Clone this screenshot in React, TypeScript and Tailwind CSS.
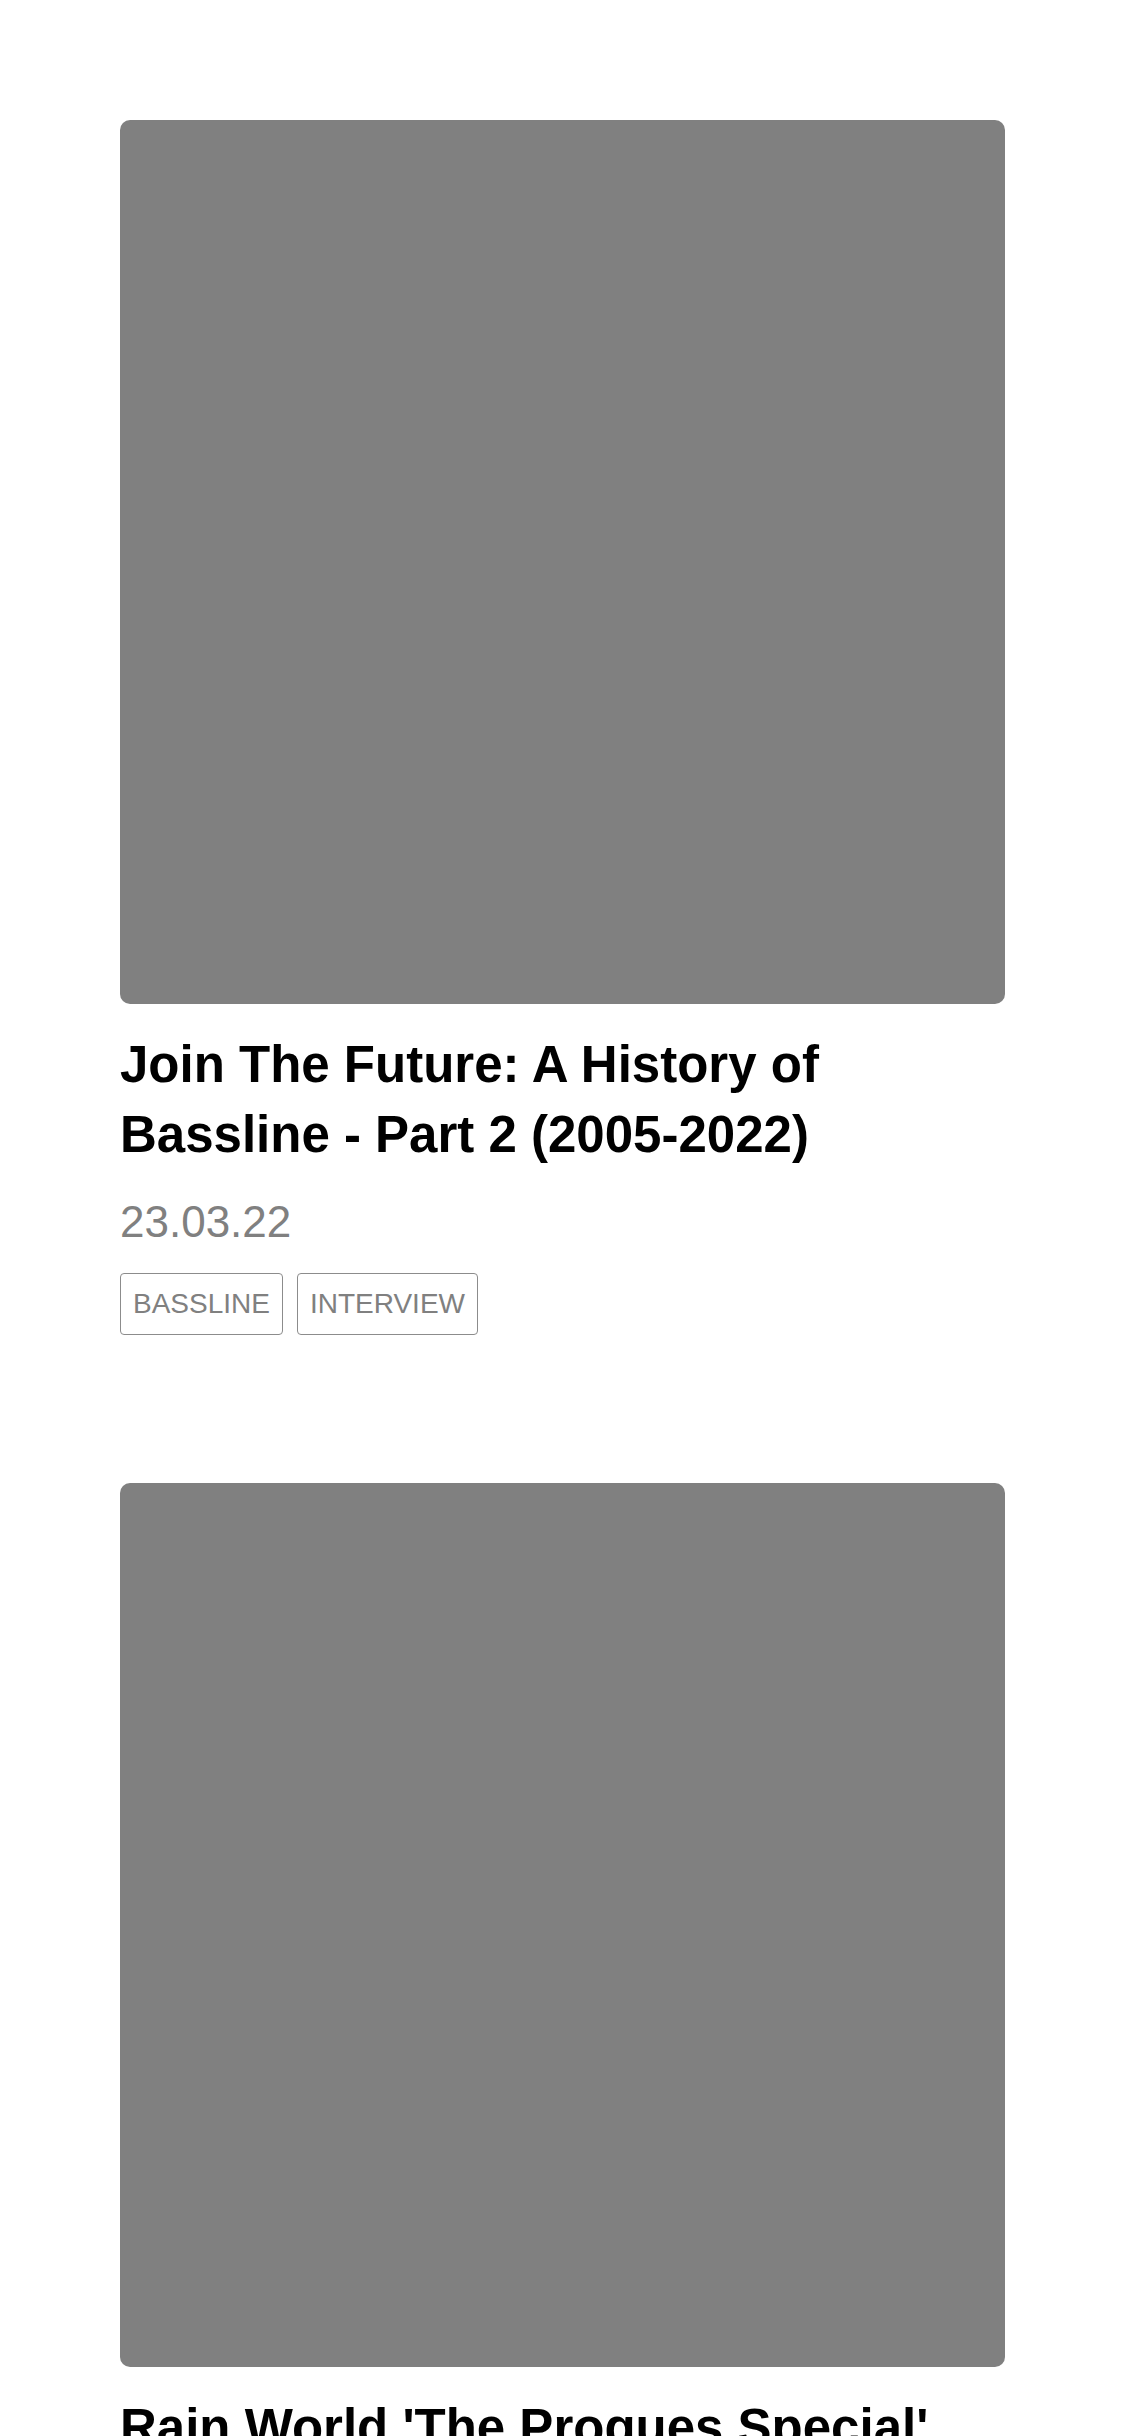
const POSTS = [
  {
    title: "Join The Future: A History of Bassline - Part 2 (2005-2022)",
    date: "23.03.22",
    tags: ["BASSLINE", "INTERVIEW"],
  },
  {
    title: "Rain World 'The Progues Special'",
    date: "16.03.22",
    tags: ["MIX", "RADIO"],
  },
]

export default function App() {
  return (
    <div className="min-h-screen bg-white px-[120px] pt-[120px] font-['Liberation_Sans',Arial,sans-serif]">
      <div className="flex flex-col gap-[148px]">
        {POSTS.map((post) => (
          <article key={post.title} className="flex flex-col">
            {/* Cover */}
            <div className="h-[884px] w-full rounded-[10px] bg-[#808080]" />

            <h2 className="mt-[26px] text-[51px] font-bold leading-[70px] text-black">
              {post.title}
            </h2>

            <p className="mt-[28px] text-[44px] leading-[48px] text-[#808080]">{post.date}</p>

            <div className="mt-[27px] flex gap-[14px]">
              {post.tags.map((tag) => (
                <span
                  key={tag}
                  className="flex h-[62px] items-center rounded-[4px] border border-[#8c8c8c] px-[12px] text-[28px] text-[#808080]"
                >
                  {tag}
                </span>
              ))}
            </div>
          </article>
        ))}
      </div>
    </div>
  )
}
